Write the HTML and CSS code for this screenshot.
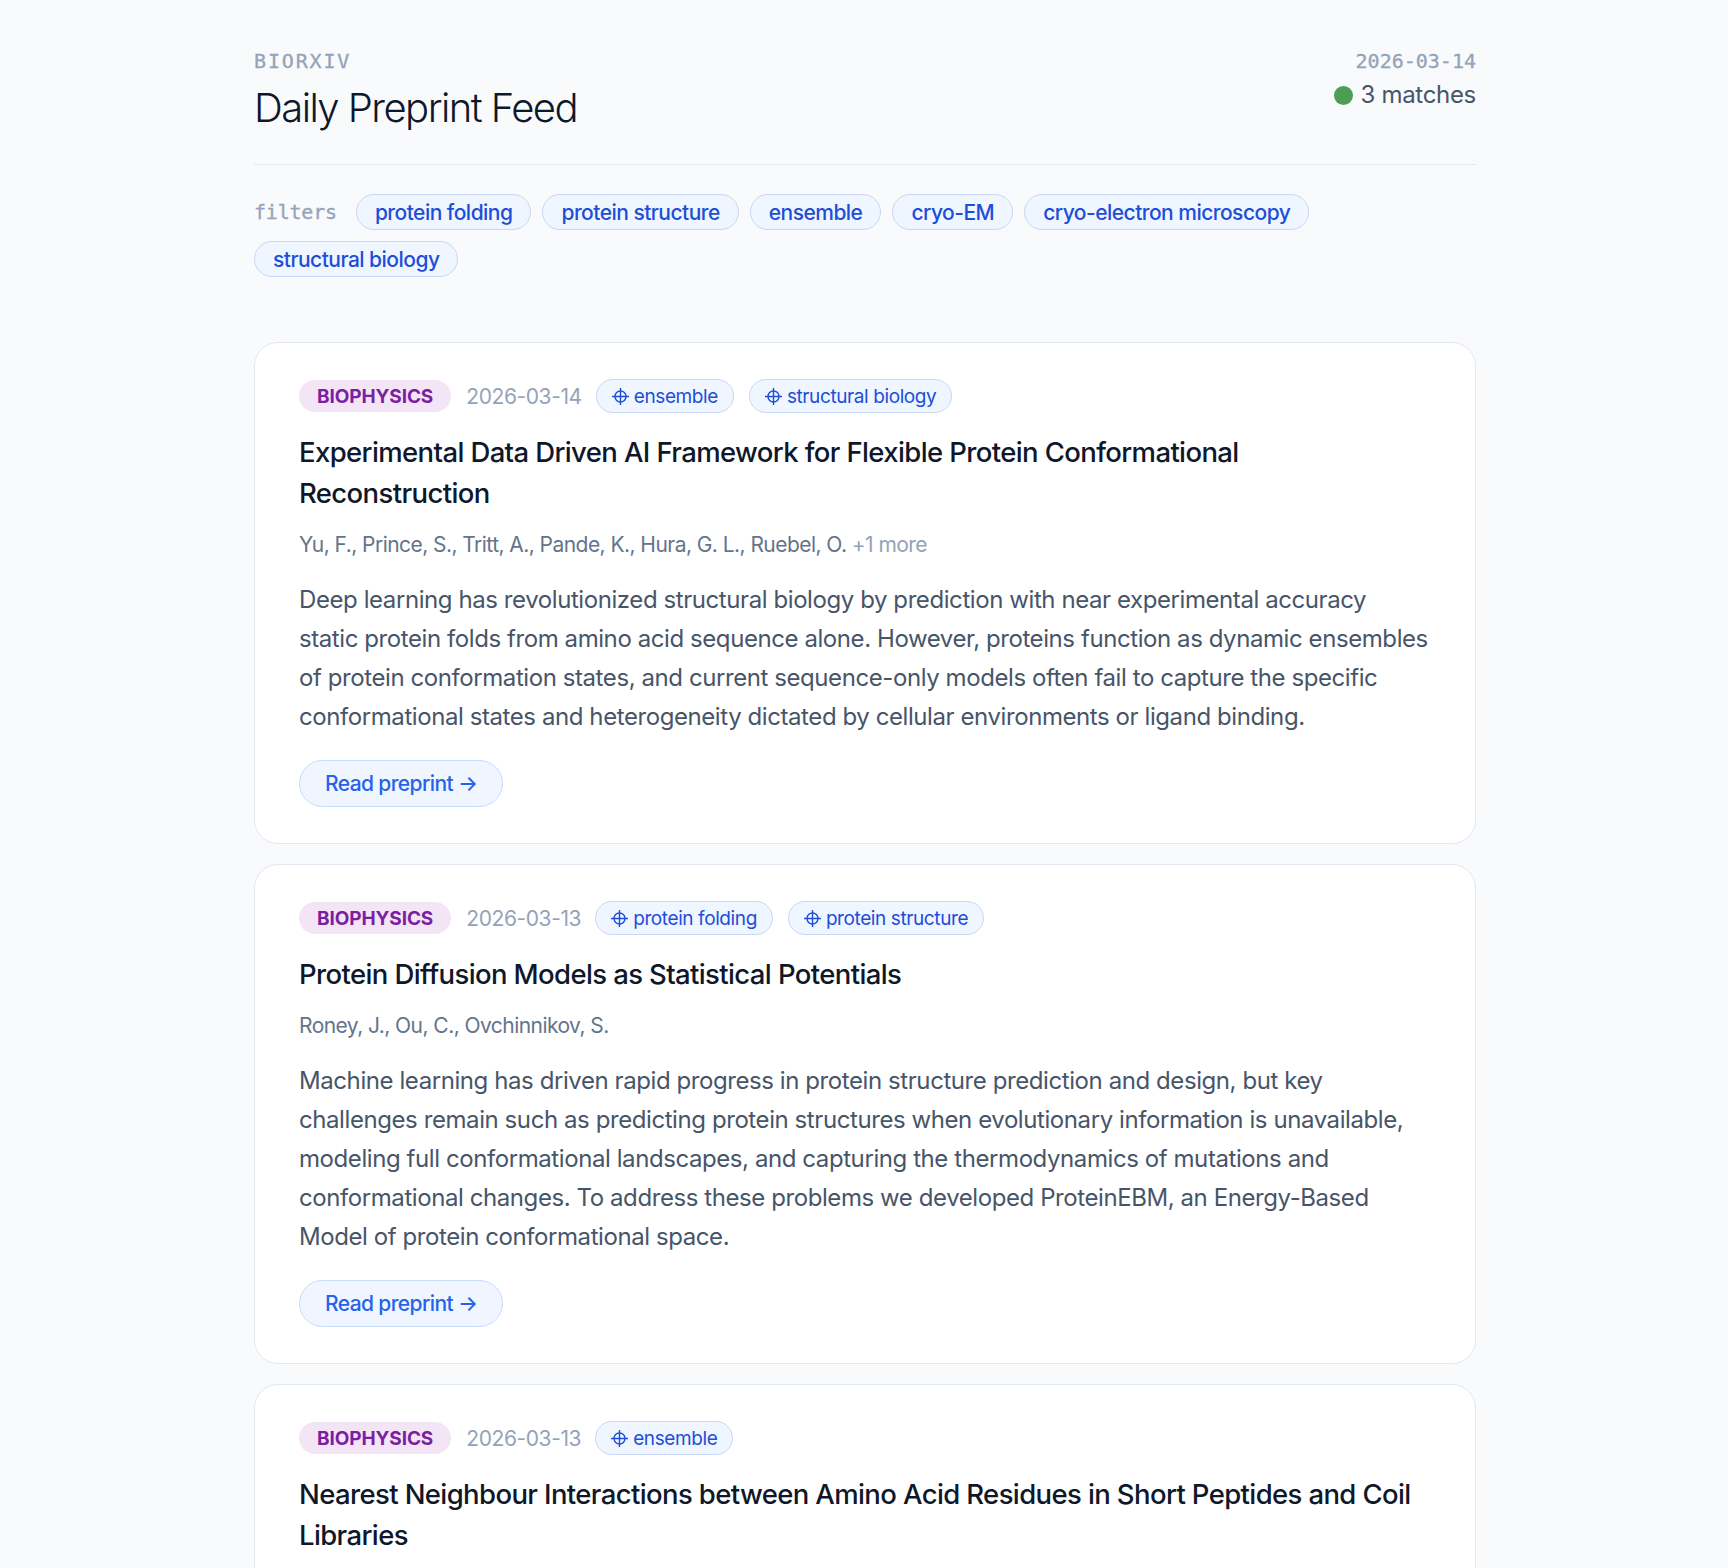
FILE: index.html
```html
<!DOCTYPE html>
<html lang="en">
<head>
    <meta charset="UTF-8">
    <meta name="viewport" content="width=device-width, initial-scale=1.0">
    <title>Daily Preprint Feed</title>
    <link rel="stylesheet" href="styles.css">
</head>
<body>
    <svg width="0" height="0" class="defs">
        <symbol id="target" viewBox="0 0 19 19">
            <circle cx="9.5" cy="9.5" r="5.5" fill="none" stroke="currentColor" stroke-width="1.4"/>
            <path d="M9.5 1v17M1 9.5h17" stroke="currentColor" stroke-width="1.4" fill="none"/>
        </symbol>
    </svg>
    <div id="main">
        <header class="top">
            <div>
                <div class="source">BIORXIV</div>
                <h1>Daily Preprint Feed</h1>
            </div>
            <div class="status">
                <div class="run_date">2026-03-14</div>
                <div class="matches"><span class="dot"></span>3 matches</div>
            </div>
        </header>

        <div class="filters">
            <span class="filters_label">filters</span>
            <span class="chip">protein folding</span>
            <span class="chip">protein structure</span>
            <span class="chip">ensemble</span>
            <span class="chip">cryo-EM</span>
            <span class="chip">cryo-electron microscopy</span>
            <span class="chip">structural biology</span>
        </div>

        <div class="feed">
            <article class="card">
                <div class="meta">
                    <span class="category">BIOPHYSICS</span>
                    <span class="date">2026-03-14</span>
                    <span class="match"><svg class="icon"><use href="#target"/></svg>ensemble</span>
                    <span class="match"><svg class="icon"><use href="#target"/></svg>structural biology</span>
                </div>
                <h2>Experimental Data Driven AI Framework for Flexible Protein Conformational Reconstruction</h2>
                <p class="authors">Yu, F., Prince, S., Tritt, A., Pande, K., Hura, G. L., Ruebel, O. <span class="more">+1 more</span></p>
                <p class="abstract">Deep learning has revolutionized structural biology by prediction with near experimental accuracy<br>static protein folds from amino acid sequence alone. However, proteins function as dynamic ensembles of protein conformation states, and current sequence-only models often fail to capture the specific conformational states and heterogeneity dictated by cellular environments or ligand binding.</p>
                <a class="read" href="#">Read preprint →</a>
            </article>

            <article class="card">
                <div class="meta">
                    <span class="category">BIOPHYSICS</span>
                    <span class="date">2026-03-13</span>
                    <span class="match"><svg class="icon"><use href="#target"/></svg>protein folding</span>
                    <span class="match"><svg class="icon"><use href="#target"/></svg>protein structure</span>
                </div>
                <h2>Protein Diffusion Models as Statistical Potentials</h2>
                <p class="authors">Roney, J., Ou, C., Ovchinnikov, S.</p>
                <p class="abstract">Machine learning has driven rapid progress in protein structure prediction and design, but key challenges remain such as predicting protein structures when evolutionary information is unavailable, modeling full conformational landscapes, and capturing the thermodynamics of mutations and conformational changes. To address these problems we developed ProteinEBM, an Energy-Based Model of protein conformational space.</p>
                <a class="read" href="#">Read preprint →</a>
            </article>

            <article class="card">
                <div class="meta">
                    <span class="category">BIOPHYSICS</span>
                    <span class="date">2026-03-13</span>
                    <span class="match"><svg class="icon"><use href="#target"/></svg>ensemble</span>
                </div>
                <h2>Nearest Neighbour Interactions between Amino Acid Residues in Short Peptides and Coil Libraries</h2>
            </article>
        </div>
    </div>
</body>
</html>
```

FILE: styles.css
```css
*{
    box-sizing: border-box;
}
html, body{
    height: 1568px;
    overflow: hidden;
}
body{
    margin: 0;
    background: #f8fafc;
    font-family: Inter, "Noto Sans", sans-serif;
    color: #0f172a;
}
.defs{
    position: absolute;
}
#main{
    width: 1222px;
    margin-left: 254px;
    padding-top: 48px;
}
.top{
    display: flex;
    justify-content: space-between;
    align-items: flex-start;
    padding-bottom: 31px;
    border-bottom: 1px solid #e2e8f0;
}
.source{
    font-family: "DejaVu Sans Mono", monospace;
    font-size: 20px;
    line-height: 26px;
    letter-spacing: 1.85px;
    color: #94a3b8;
    -webkit-text-stroke: 0.3px #94a3b8;
}
h1{
    margin: 9px 0 0;
    font-size: 40px;
    line-height: 50px;
    font-weight: 300;
    letter-spacing: -1.55px;
}
.status{
    text-align: right;
}
.run_date{
    font-family: "DejaVu Sans Mono", monospace;
    font-size: 20px;
    line-height: 26px;
    color: #94a3b8;
    -webkit-text-stroke: 0.3px #94a3b8;
}
.matches{
    display: flex;
    align-items: center;
    justify-content: flex-end;
    gap: 7px;
    margin-top: 5px;
    font-size: 24px;
    line-height: 32px;
    letter-spacing: -0.3px;
    color: #475569;
}
.dot{
    width: 19px;
    height: 19px;
    border-radius: 50%;
    background: #4a9f55;
}
.filters{
    display: flex;
    flex-wrap: wrap;
    align-items: center;
    gap: 11px;
    margin-top: 29px;
}
.filters_label{
    font-family: "DejaVu Sans Mono", monospace;
    font-size: 20px;
    letter-spacing: -0.2px;
    color: #94a3b8;
    -webkit-text-stroke: 0.3px #94a3b8;
    margin-right: 8px;
}
.chip{
    height: 36px;
    padding: 0 18px;
    display: flex;
    align-items: center;
    border: 1px solid #c7d7f5;
    border-radius: 18px;
    background: #eff6ff;
    color: #1d4ed8;
    font-size: 21px;
    font-weight: 500;
    letter-spacing: -0.53px;
}
.feed{
    display: flex;
    flex-direction: column;
    gap: 20px;
    margin-top: 65px;
}
.card{
    padding: 36px 38px 36px 44px;
    background: #fff;
    border: 1px solid #e2e8f0;
    border-radius: 24px;
}
.meta{
    display: flex;
    align-items: center;
    gap: 15px;
}
.category{
    height: 32px;
    padding: 0 18px;
    display: flex;
    align-items: center;
    border-radius: 16px;
    background: #f3e5f5;
    color: #7b1fa2;
    font-size: 19px;
    font-weight: 700;
    letter-spacing: -0.1px;
}
.date{
    font-size: 21px;
    letter-spacing: -0.4px;
    color: #94a3b8;
    margin-right: -1px;
}
.match{
    height: 34px;
    padding: 0 15px 0 14px;
    display: flex;
    align-items: center;
    gap: 4px;
    border: 1px solid #c7d7f5;
    border-radius: 17px;
    background: #eff6ff;
    color: #1d4ed8;
    font-size: 19px;
    letter-spacing: -0.4px;
}
.icon{
    width: 19px;
    height: 19px;
}
h2{
    max-width: 1125px;
    margin: 19px 0 0;
    font-size: 27.5px;
    line-height: 41px;
    font-weight: 500;
    letter-spacing: -0.62px;
}
.authors{
    margin: 16px 0 0;
    font-size: 21px;
    line-height: 30px;
    letter-spacing: -0.55px;
    color: #64748b;
}
.more{
    color: #94a3b8;
}
.abstract{
    margin: 20px 0 0;
    font-size: 24px;
    line-height: 39px;
    letter-spacing: -0.42px;
    color: #475569;
}
.read{
    display: inline-flex;
    align-items: center;
    height: 47px;
    margin-top: 24px;
    padding: 0 25px;
    border: 1px solid #c7dcf8;
    border-radius: 24px;
    background: #eff6ff;
    color: #2563eb;
    font-size: 21px;
    font-weight: 500;
    letter-spacing: -0.6px;
    text-decoration: none;
}
```
